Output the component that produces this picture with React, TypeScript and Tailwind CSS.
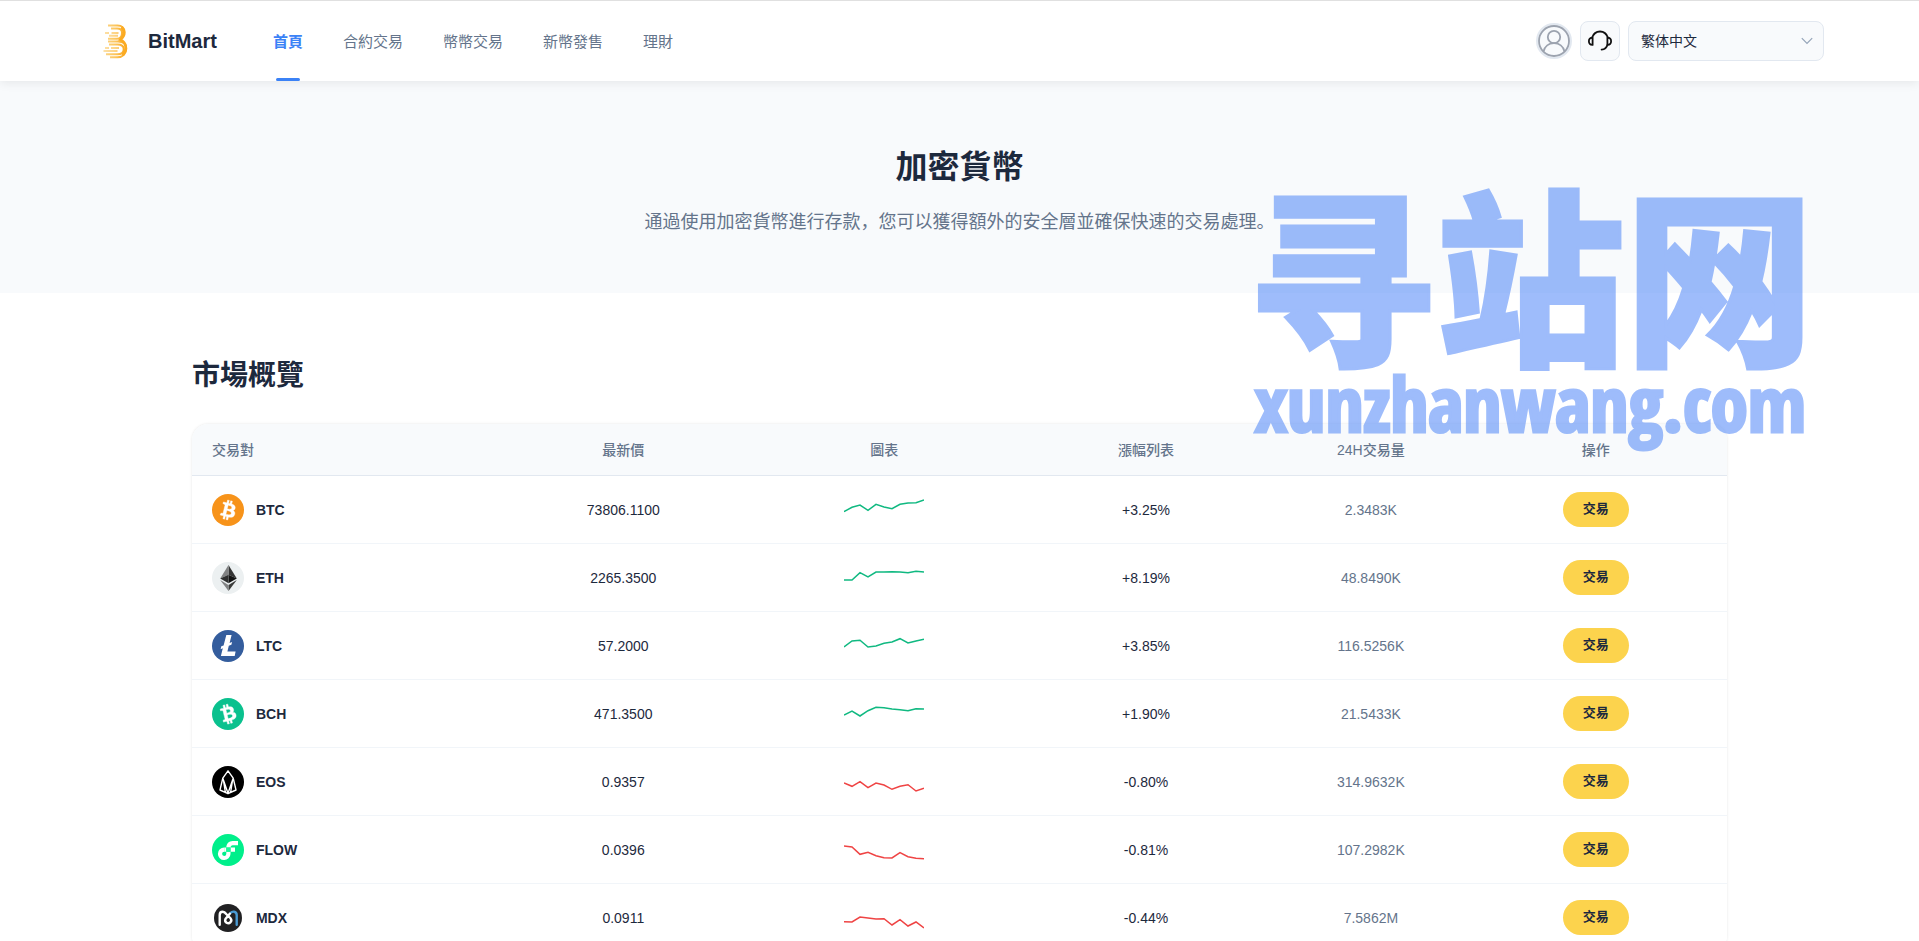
import React from "react";

type Coin = {
  symbol: string;
  price: string;
  change: string;
  volume: string;
  trend: number[];
  icon: React.ReactNode;
};

const BITCOIN_GLYPH =
  "M23.189 14.02c.314-2.096-1.283-3.223-3.465-3.975l.708-2.84-1.728-.43-.69 2.765c-.454-.114-.92-.22-1.385-.326l.695-2.783L15.596 6l-.708 2.839c-.376-.086-.746-.17-1.104-.26l.002-.009-2.384-.595-.46 1.846s1.283.294 1.256.312c.7.175.826.638.805 1.006l-.806 3.235c.048.012.11.03.18.057l-.183-.045-1.13 4.532c-.086.212-.303.531-.793.41.018.025-1.256-.313-1.256-.313l-.858 1.978 2.25.561c.418.105.828.215 1.231.318l-.715 2.872 1.727.43.708-2.84c.472.127.93.245 1.378.357l-.706 2.828 1.728.43.715-2.866c2.948.558 5.164.333 6.097-2.333.752-2.146-.037-3.385-1.588-4.192 1.13-.26 1.98-1.003 2.207-2.538zm-3.95 5.538c-.533 2.147-4.148.986-5.32.695l.95-3.805c1.172.293 4.929.872 4.37 3.11zm.535-5.569c-.487 1.953-3.495.96-4.47.717l.86-3.45c.975.243 4.118.696 3.61 2.733z";

const coins: Coin[] = [
  {
    symbol: "BTC",
    price: "73806.1100",
    change: "+3.25%",
    volume: "2.3483K",
    trend: [21.7, 17.3, 15, 20.3, 14.3, 17, 18.7, 14.3, 13, 12.7, 10],
    icon: (
      <>
        <circle cx="16" cy="16" r="16" fill="#f7931a" />
        <path d={BITCOIN_GLYPH} fill="#fff" stroke="#fff" strokeWidth="0.4" />
      </>
    ),
  },
  {
    symbol: "ETH",
    price: "2265.3500",
    change: "+8.19%",
    volume: "48.8490K",
    trend: [22, 22, 14.7, 19, 14, 14, 13.7, 14, 14.7, 13.3, 14],
    icon: (
      <>
        <circle cx="16" cy="16" r="16" fill="#ecf0f1" />
        <path d="M16.5 3v9.8l8.3 3.7z" fill="#343434" />
        <path d="M16.5 3L8.2 16.5l8.3-3.7z" fill="#828384" />
        <path d="M16.5 21.3l8.3-4.8-8.3-3.7z" fill="#131313" />
        <path d="M8.2 16.5l8.3 4.8v-8.5z" fill="#2f3030" />
        <path d="M16.5 23v6l8.3-11z" fill="#3c3c3b" />
        <path d="M16.5 29v-6l-8.3-5z" fill="#828384" />
      </>
    ),
  },
  {
    symbol: "LTC",
    price: "57.2000",
    change: "+3.85%",
    volume: "116.5256K",
    trend: [21, 15, 14.3, 21, 20, 17.3, 16, 12.7, 17, 15, 13.3],
    icon: (
      <>
        <circle cx="16" cy="16" r="16" fill="#345d9d" />
        <path
          d="M10.8 18.3l-2.200.9.700-2.900 2.300-.9L14.300 5h5.300l-2 7.900 2.500-1-.700 2.900-2.600 1-1.400 5.700h8.200L22.700 26H8.900z"
          fill="#fff"
        />
      </>
    ),
  },
  {
    symbol: "BCH",
    price: "471.3500",
    change: "+1.90%",
    volume: "21.5433K",
    trend: [21, 17, 22, 16.7, 13.3, 13.7, 15, 15.7, 16.7, 14.7, 15],
    icon: (
      <>
        <circle cx="16" cy="16" r="16" fill="#0ac18e" />
        <path d={BITCOIN_GLYPH} fill="#fff" stroke="#fff" strokeWidth="0.4" transform="rotate(-28 16 16)" />
      </>
    ),
  },
  {
    symbol: "EOS",
    price: "0.9357",
    change: "-0.80%",
    volume: "314.9632K",
    trend: [21, 24.3, 19.7, 25.7, 21, 23, 27.3, 24.3, 22.7, 29, 26.3],
    icon: (
      <>
        <circle cx="16" cy="16" r="16" fill="#000" />
        <path
          d="M16 4.8l-5.2 7.4L8 24l8 3.7 8-3.7-2.8-11.8zM10.8 12.2L16 27.3l5.2-15.1M11.5 14.5l1.8 11.5M20.5 14.5L18.7 26"
          fill="none"
          stroke="#fff"
          strokeWidth="1.4"
          strokeLinejoin="round"
        />
      </>
    ),
  },
  {
    symbol: "FLOW",
    price: "0.0396",
    change: "-0.81%",
    volume: "107.2982K",
    trend: [16, 17, 24.3, 22.3, 25.7, 27.7, 28, 22.7, 26.7, 28.3, 28.7],
    icon: (
      <>
        <circle cx="16" cy="16" r="16" fill="#00ef8b" />
        <path
          d="M18.5 13.5H23v4.3h-4.5zM14.3 13.5C14.3 9.8 17 7 20.7 7H26v4.2h-5.3c-1.3 0-2.2 1-2.2 2.3zM14.3 17.8V20a2.1 2.1 0 1 1-2.1-2.2v-4.3a6.3 6.3 0 1 0 6.3 6.5v-2.2z"
          fill="#fff"
        />
        <path d="M14.3 13.5h-2.1v4.3h2.1z" fill="#fff" />
        <path d="M14.3 13.5h4.2v4.3h-4.2z" fill="#16ff99" />
      </>
    ),
  },
  {
    symbol: "MDX",
    price: "0.0911",
    change: "-0.44%",
    volume: "7.5862M",
    trend: [23.7, 24, 19, 20, 21, 20.7, 27, 21.7, 28, 24, 30],
    icon: (
      <>
        <circle cx="16" cy="16" r="14" fill="#212123" />
        <g fill="none" strokeWidth="2.4" strokeLinecap="round">
          <path d="M18.5 11c1-1.1 2.3-1.5 3.6-1.3 1.7.3 2.6 1.5 2.6 3.3v9.7" stroke="#4a9bd4" />
          <path
            d="M7.7 22.7V13c0-2 1.1-3.2 3-3.2 1.5 0 2.5.8 3.5 2.2l4.3 4.2a3 3 0 1 1-5 .7l4.300-5.200"
            stroke="#fff"
          />
        </g>
      </>
    ),
  },
];

const navItems = ["首頁", "合約交易", "幣幣交易", "新幣發售", "理財"];

function Logo() {
  return (
    <svg viewBox="0 0 40 40" className="size-10" fill="none" aria-hidden="true">
      <defs>
        <linearGradient id="brand" x1="8" y1="0" x2="30" y2="0" gradientUnits="userSpaceOnUse">
          <stop offset="0" stopColor="#fbd588" />
          <stop offset="0.5" stopColor="#fcc65f" />
          <stop offset="1" stopColor="#f9a51a" />
        </linearGradient>
      </defs>
      <g stroke="url(#brand)" strokeWidth="2">
        <path d="M12 4.5h9.5c4.5 0 7.2 2.8 7.2 6.7 0 3.3-1.7 5.7-4.2 7.2" />
        <path d="M15 7.5h6c3.1 0 5 1.5 5 4.2 0 3.6-2 6-5 6h-9" />
        <path d="M9 12h4M15.5 12h7M13 14.8h9" opacity="0.75" />
        <path d="M12 20.5h10c5.3 0 8.300 2.300 8.300 7 0 5.300-3.500 8.800-8.800 8.800H14" />
        <path d="M13 23.5h8.500c4 0 6.200 1.500 6.200 4.500 0 3.500-2.400 5.300-6.200 5.300H10" />
        <path d="M9 27h4M15 27h8M7.5 30h14" opacity="0.75" />
      </g>
      <path
        d="M25.5 6c3.5 3.800 2.500 9.800-1.200 12.800 6.200 2.200 7.200 10.400 2 15.200"
        stroke="#fbab22"
        strokeWidth="2.6"
      />
    </svg>
  );
}

function AvatarIcon() {
  return (
    <svg viewBox="0 0 32 32" className="size-8" fill="none" stroke="#9ca3af" strokeWidth="1.8" aria-hidden="true">
      <circle cx="16" cy="16" r="15" />
      <circle cx="16" cy="12" r="6.2" />
      <path d="M5.5 26.5c1.200-5 5.300-8.300 10.500-8.300s9.300 3.300 10.500 8.300" />
    </svg>
  );
}

function HeadsetIcon() {
  return (
    <svg
      viewBox="0 0 24 24"
      className="size-6"
      fill="none"
      stroke="#111"
      strokeWidth="1.8"
      strokeLinecap="round"
      strokeLinejoin="round"
      aria-hidden="true"
    >
      <path d="M4 8.7C5.3 5 8.3 2.500 12 2.500S18.700 5 20 8.700" />
      <path d="M4.6 8.7v7.200C2 16 .9 14.500.9 12.300s1.100-3.600 3.700-3.600z" />
      <path d="M19.4 8.7v7.200c2.600.1 3.700-1.400 3.700-3.600s-1.100-3.600-3.700-3.600z" />
      <path d="M19.4 16c-.8 2.900-2.700 4.400-5.800 4.700" />
    </svg>
  );
}

function Sparkline({ trend, rising }: { trend: number[]; rising: boolean }) {
  return (
    <svg viewBox="0 0 80 40" className="mx-auto block h-10 w-20" aria-hidden="true">
      <polyline
        points={trend.map((y, i) => `${i * 8},${y}`).join(" ")}
        fill="none"
        stroke={rising ? "#10b981" : "#ef4444"}
        strokeWidth="1.5"
      />
    </svg>
  );
}

function Header() {
  return (
    <header className="relative z-10 flex h-[81px] items-center border-t border-[#e0e0e0] bg-white pr-[95px] pl-24 shadow-[0_2px_10px_rgba(0,0,0,0.08)]">
      <a href="#" className="flex items-center gap-3 text-xl font-bold text-slate-800">
        <Logo />
        BitMart
      </a>
      <nav className="ml-14 flex h-full gap-10 text-[15px]">
        {navItems.map((item, i) => (
          <a
            key={item}
            href="#"
            className={
              i === 0
                ? "relative flex items-center pt-0.5 font-bold text-[#3b82f6]"
                : "relative flex items-center pt-0.5 text-[#64748b]"
            }
          >
            {item}
            {i === 0 && (
              <span className="absolute bottom-0 left-1/2 h-[3px] w-6 -translate-x-1/2 rounded-sm bg-[#3b82f6]" />
            )}
          </a>
        ))}
      </nav>
      <div className="ml-auto flex items-center gap-2">
        <button
          type="button"
          aria-label="帳戶"
          className="flex size-9 items-center justify-center rounded-full border-2 border-slate-200 bg-slate-50"
        >
          <AvatarIcon />
        </button>
        <button
          type="button"
          aria-label="客服"
          className="flex size-10 items-center justify-center rounded-lg border border-slate-200 bg-slate-50"
        >
          <HeadsetIcon />
        </button>
        <div className="relative">
          <select
            aria-label="語言"
            className="h-10 w-[196px] appearance-none rounded-lg border border-slate-200 bg-slate-50 px-3 text-sm text-slate-800"
          >
            <option>繁体中文</option>
          </select>
          <svg
            viewBox="0 0 12 8"
            className="pointer-events-none absolute top-4 right-[11px] h-2 w-3"
            fill="none"
            stroke="#94a3b8"
            strokeWidth="1.2"
            aria-hidden="true"
          >
            <path d="M.8 1.2L6 6.4l5.200-5.200" />
          </svg>
        </div>
      </div>
    </header>
  );
}

function MarketTable() {
  return (
    <div className="overflow-hidden rounded-2xl shadow-[0_0_3px_rgba(0,0,0,0.1)]">
      <table className="w-full table-fixed border-separate border-spacing-0 text-center text-sm text-slate-800">
        <colgroup>
          <col className="w-[19.6%]" />
          <col className="w-[17%]" />
          <col className="w-[17%]" />
          <col className="w-[17.1%]" />
          <col className="w-[12.2%]" />
          <col className="w-[17.1%]" />
        </colgroup>
        <thead>
          <tr className="h-[52px] bg-slate-50 text-[#64748b]">
            <th className="border-b border-slate-200 px-5 text-left font-medium">交易對</th>
            <th className="border-b border-slate-200 font-medium">最新價</th>
            <th className="border-b border-slate-200 font-medium">圖表</th>
            <th className="border-b border-slate-200 font-medium">漲幅列表</th>
            <th className="border-b border-slate-200 font-medium">24H交易量</th>
            <th className="border-b border-slate-200 font-medium">操作</th>
          </tr>
        </thead>
        <tbody>
          {coins.map((coin) => (
            <tr key={coin.symbol} className="h-[68px] bg-white">
              <td className="border-b border-slate-100 px-5">
                <span className="flex items-center gap-3 font-bold">
                  <svg viewBox="0 0 32 32" className="size-8" aria-hidden="true">
                    {coin.icon}
                  </svg>
                  {coin.symbol}
                </span>
              </td>
              <td className="border-b border-slate-100">{coin.price}</td>
              <td className="border-b border-slate-100">
                <Sparkline trend={coin.trend} rising={coin.change.startsWith("+")} />
              </td>
              <td className="border-b border-slate-100">{coin.change}</td>
              <td className="border-b border-slate-100 text-[#64748b]">{coin.volume}</td>
              <td className="border-b border-slate-100">
                <button
                  type="button"
                  className="h-[35px] rounded-full bg-[#fcd34d] px-5 text-[13px] font-bold text-slate-800"
                >
                  交易
                </button>
              </td>
            </tr>
          ))}
        </tbody>
      </table>
    </div>
  );
}

function Watermark() {
  return (
    <div className="pointer-events-none absolute top-[174px] right-[113px] z-20 flex flex-col items-end whitespace-nowrap text-[#3f7bf8] opacity-50">
      <span className="-mr-2 font-['Noto_Sans_CJK_SC',sans-serif] text-[189px] leading-[190px] font-black [-webkit-text-stroke:3px_#3f7bf8]">
        寻站网
      </span>
      <span className="mt-2 font-['Noto_Sans_ExtraCondensed','Noto_Sans_Condensed','Open_Sans_Condensed','Roboto_Condensed','Liberation_Sans_Narrow','Noto_Sans',sans-serif] text-[75px] leading-[62px] font-black [-webkit-text-stroke:3px_#3f7bf8]">
        xunzhanwang.com
      </span>
    </div>
  );
}

export default function App() {
  return (
    <div className="relative h-screen overflow-x-hidden bg-white font-['Liberation_Sans','Noto_Sans_CJK_SC',sans-serif]">
      <Header />
      <main>
        <section className="flex h-[212px] flex-col items-center bg-slate-50 pt-[62px] text-center">
          <h1 className="text-[32px] leading-[48px] font-bold text-slate-800">加密貨幣</h1>
          <p className="mt-4 text-lg leading-[30px] text-[#64748b]">
            通過使用加密貨幣進行存款，您可以獲得額外的安全層並確保快速的交易處理。
          </p>
        </section>
        <section className="mx-auto w-4/5 pt-[62px]">
          <h2 className="mb-[27px] text-[28px] leading-[42px] font-bold text-slate-800">市場概覽</h2>
          <MarketTable />
        </section>
      </main>
      <Watermark />
    </div>
  );
}
